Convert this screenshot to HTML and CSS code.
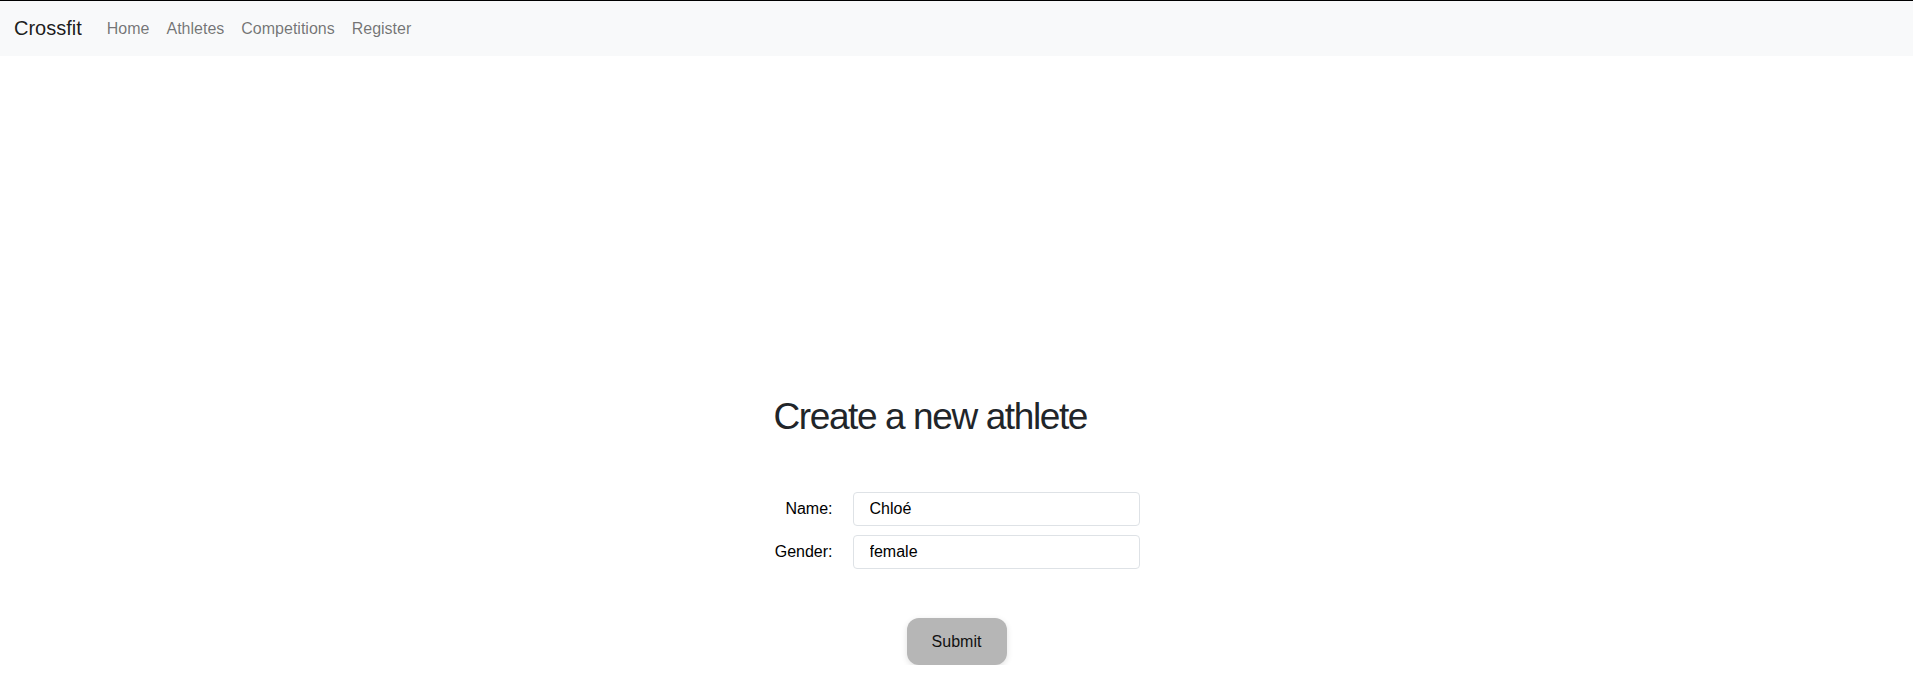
FILE: index.html
```html
<!DOCTYPE html>
<html lang="en">
<head>
<meta charset="utf-8">
<title>Crossfit</title>
<link rel="stylesheet" href="styles.css">
</head>
<body>
<nav class="navbar">
  <a class="brand" href="#">Crossfit</a>
  <ul class="nav-links">
    <li><a href="#">Home</a></li>
    <li><a href="#">Athletes</a></li>
    <li><a href="#">Competitions</a></li>
    <li><a href="#">Register</a></li>
  </ul>
</nav>
<main class="main">
  <div class="panel">
    <h1 class="title">Create a new athlete</h1>
    <form class="form">
      <div class="rows">
        <label class="label" for="name">Name:</label>
        <input class="input" id="name" type="text" value="Chloé">
        <label class="label" for="gender">Gender:</label>
        <input class="input" id="gender" type="text" value="female">
      </div>
      <div class="actions">
        <button class="submit" type="submit">Submit</button>
      </div>
    </form>
  </div>
</main>
</body>
</html>
```
FILE: styles.css
```css
* { box-sizing: border-box; }
html, body { margin: 0; padding: 0; }
body {
  font-family: "Liberation Sans", Arial, sans-serif;
  color: #212529;
  background: #fff;
  border-top: 1px solid #000;
}
.navbar {
  display: flex;
  align-items: center;
  height: 55px;
  padding: 0 14px;
  background: #f8f9fa;
}
.brand {
  font-size: 20px;
  color: rgba(0,0,0,0.9);
  text-decoration: none;
  margin-right: 25px;
}
.nav-links {
  display: flex;
  list-style: none;
  margin: 0;
  padding: 0;
  gap: 17px;
}
.nav-links a {
  font-size: 16px;
  color: rgba(0,0,0,0.55);
  text-decoration: none;
}
.main {
  display: flex;
  justify-content: center;
  padding-top: 337px;
}
.panel {
  width: 366px;
}
.title {
  font-size: 37px;
  font-weight: 400;
  letter-spacing: -1.4px;
  line-height: 48px;
  white-space: nowrap;
  margin: 0 0 51px 0;
}
.rows {
  display: grid;
  grid-template-columns: auto 287px;
  column-gap: 20px;
  row-gap: 9px;
  align-items: center;
}
.label {
  text-align: right;
  font-size: 16px;
  color: #000;
}
.input {
  height: 34px;
  border: 1px solid #dee2e6;
  border-radius: 4px;
  padding: 0 16px;
  font-family: inherit;
  font-size: 16px;
  color: #000;
  background: #fff;
}
.actions {
  display: flex;
  justify-content: center;
  margin-top: 49px;
}
.submit {
  width: 100px;
  height: 47px;
  border: none;
  border-radius: 12px;
  background: #b6b6b6;
  color: #111;
  font-family: inherit;
  font-size: 16px;
  box-shadow: 0 2px 6px rgba(0,0,0,0.12);
}
```
